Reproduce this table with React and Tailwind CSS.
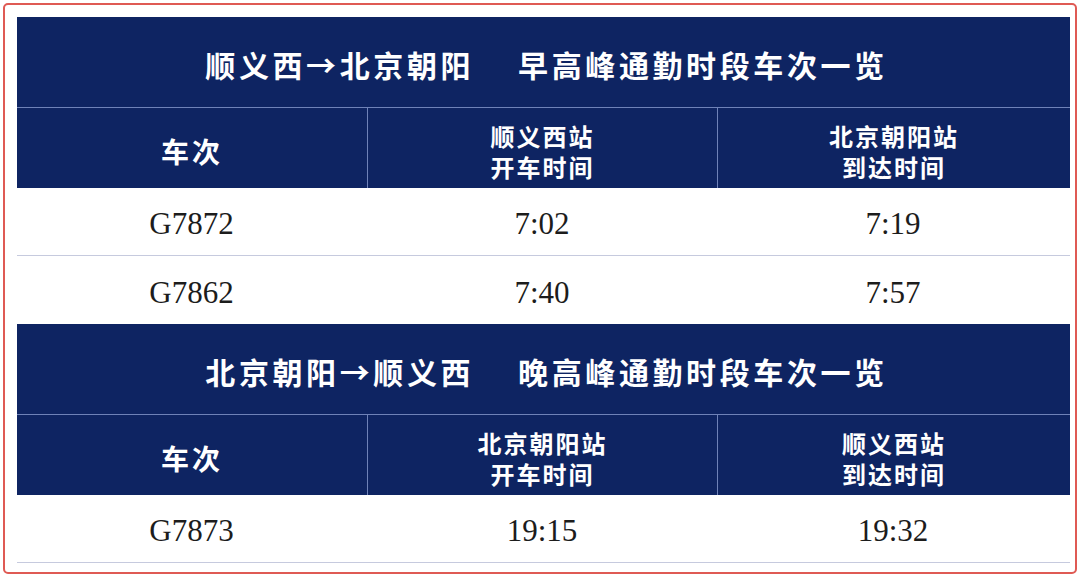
const sections = [
  {
    from: "顺义西→北京朝阳",
    label: "早高峰通勤时段车次一览",
    depart: "顺义西站",
    arrive: "北京朝阳站",
    rows: [
      ["G7872", "7:02", "7:19"],
      ["G7862", "7:40", "7:57"],
    ],
  },
  {
    from: "北京朝阳→顺义西",
    label: "晚高峰通勤时段车次一览",
    depart: "北京朝阳站",
    arrive: "顺义西站",
    rows: [["G7873", "19:15", "19:32"]],
  },
];

const cjk = "font-['Noto_Sans_CJK_SC','Noto_Sans',sans-serif]";
const serif = "font-['Liberation_Serif','Noto_Sans_CJK_SC',serif]";

const HeadCell = ({ children, last, big }) => (
  <div
    className={`flex flex-col items-center justify-center pt-[5px] font-bold text-white ${
      big ? "text-[28px] tracking-[3px]" : "text-[24px] leading-[31px] tracking-[2px]"
    } ${last ? "" : "border-r border-[#6f82b8]"}`}
  >
    {children}
  </div>
);

const Section = ({ s, last }) => (
  <div>
    <div className="h-[91px] flex items-center justify-center gap-[44px] pt-[4px] pl-[6px] text-white text-[30px] font-bold tracking-[3.6px] bg-[#0e2462] border-b border-[#6f82b8]">
      <span>{s.from}</span>
      <span>{s.label}</span>
    </div>
    <div className="h-[80px] grid grid-cols-[351px_350px_1fr] bg-[#0e2462]">
      <HeadCell big>车次</HeadCell>
      <HeadCell>
        <span>{s.depart}</span>
        <span>开车时间</span>
      </HeadCell>
      <HeadCell last>
        <span>{s.arrive}</span>
        <span>到达时间</span>
      </HeadCell>
    </div>
    {s.rows.map((r, i) => (
      <div
        key={r[0]}
        className={`h-[68px] grid grid-cols-[351px_350px_1fr] items-center text-[31px] text-[#1c1c1c] ${serif} ${
          i < s.rows.length - 1 || last ? "border-b border-[#c6cade]" : ""
        }`}
      >
        {r.map((v) => (
          <div key={v} className="text-center pt-[6px] pr-[2px]">
            {v}
          </div>
        ))}
      </div>
    ))}
  </div>
);

export default function App() {
  return (
    <div className={`w-[1080px] h-[577px] p-[3px] bg-white ${cjk}`}>
      <div className="h-full border-2 border-[#df5a54] rounded-[5px] pl-[12px] pr-[5px] pt-[12px] pb-[7px]">
        <div className="bg-white">
          {sections.map((s, i) => (
            <Section key={s.from} s={s} last={i === sections.length - 1} />
          ))}
        </div>
      </div>
    </div>
  );
}
